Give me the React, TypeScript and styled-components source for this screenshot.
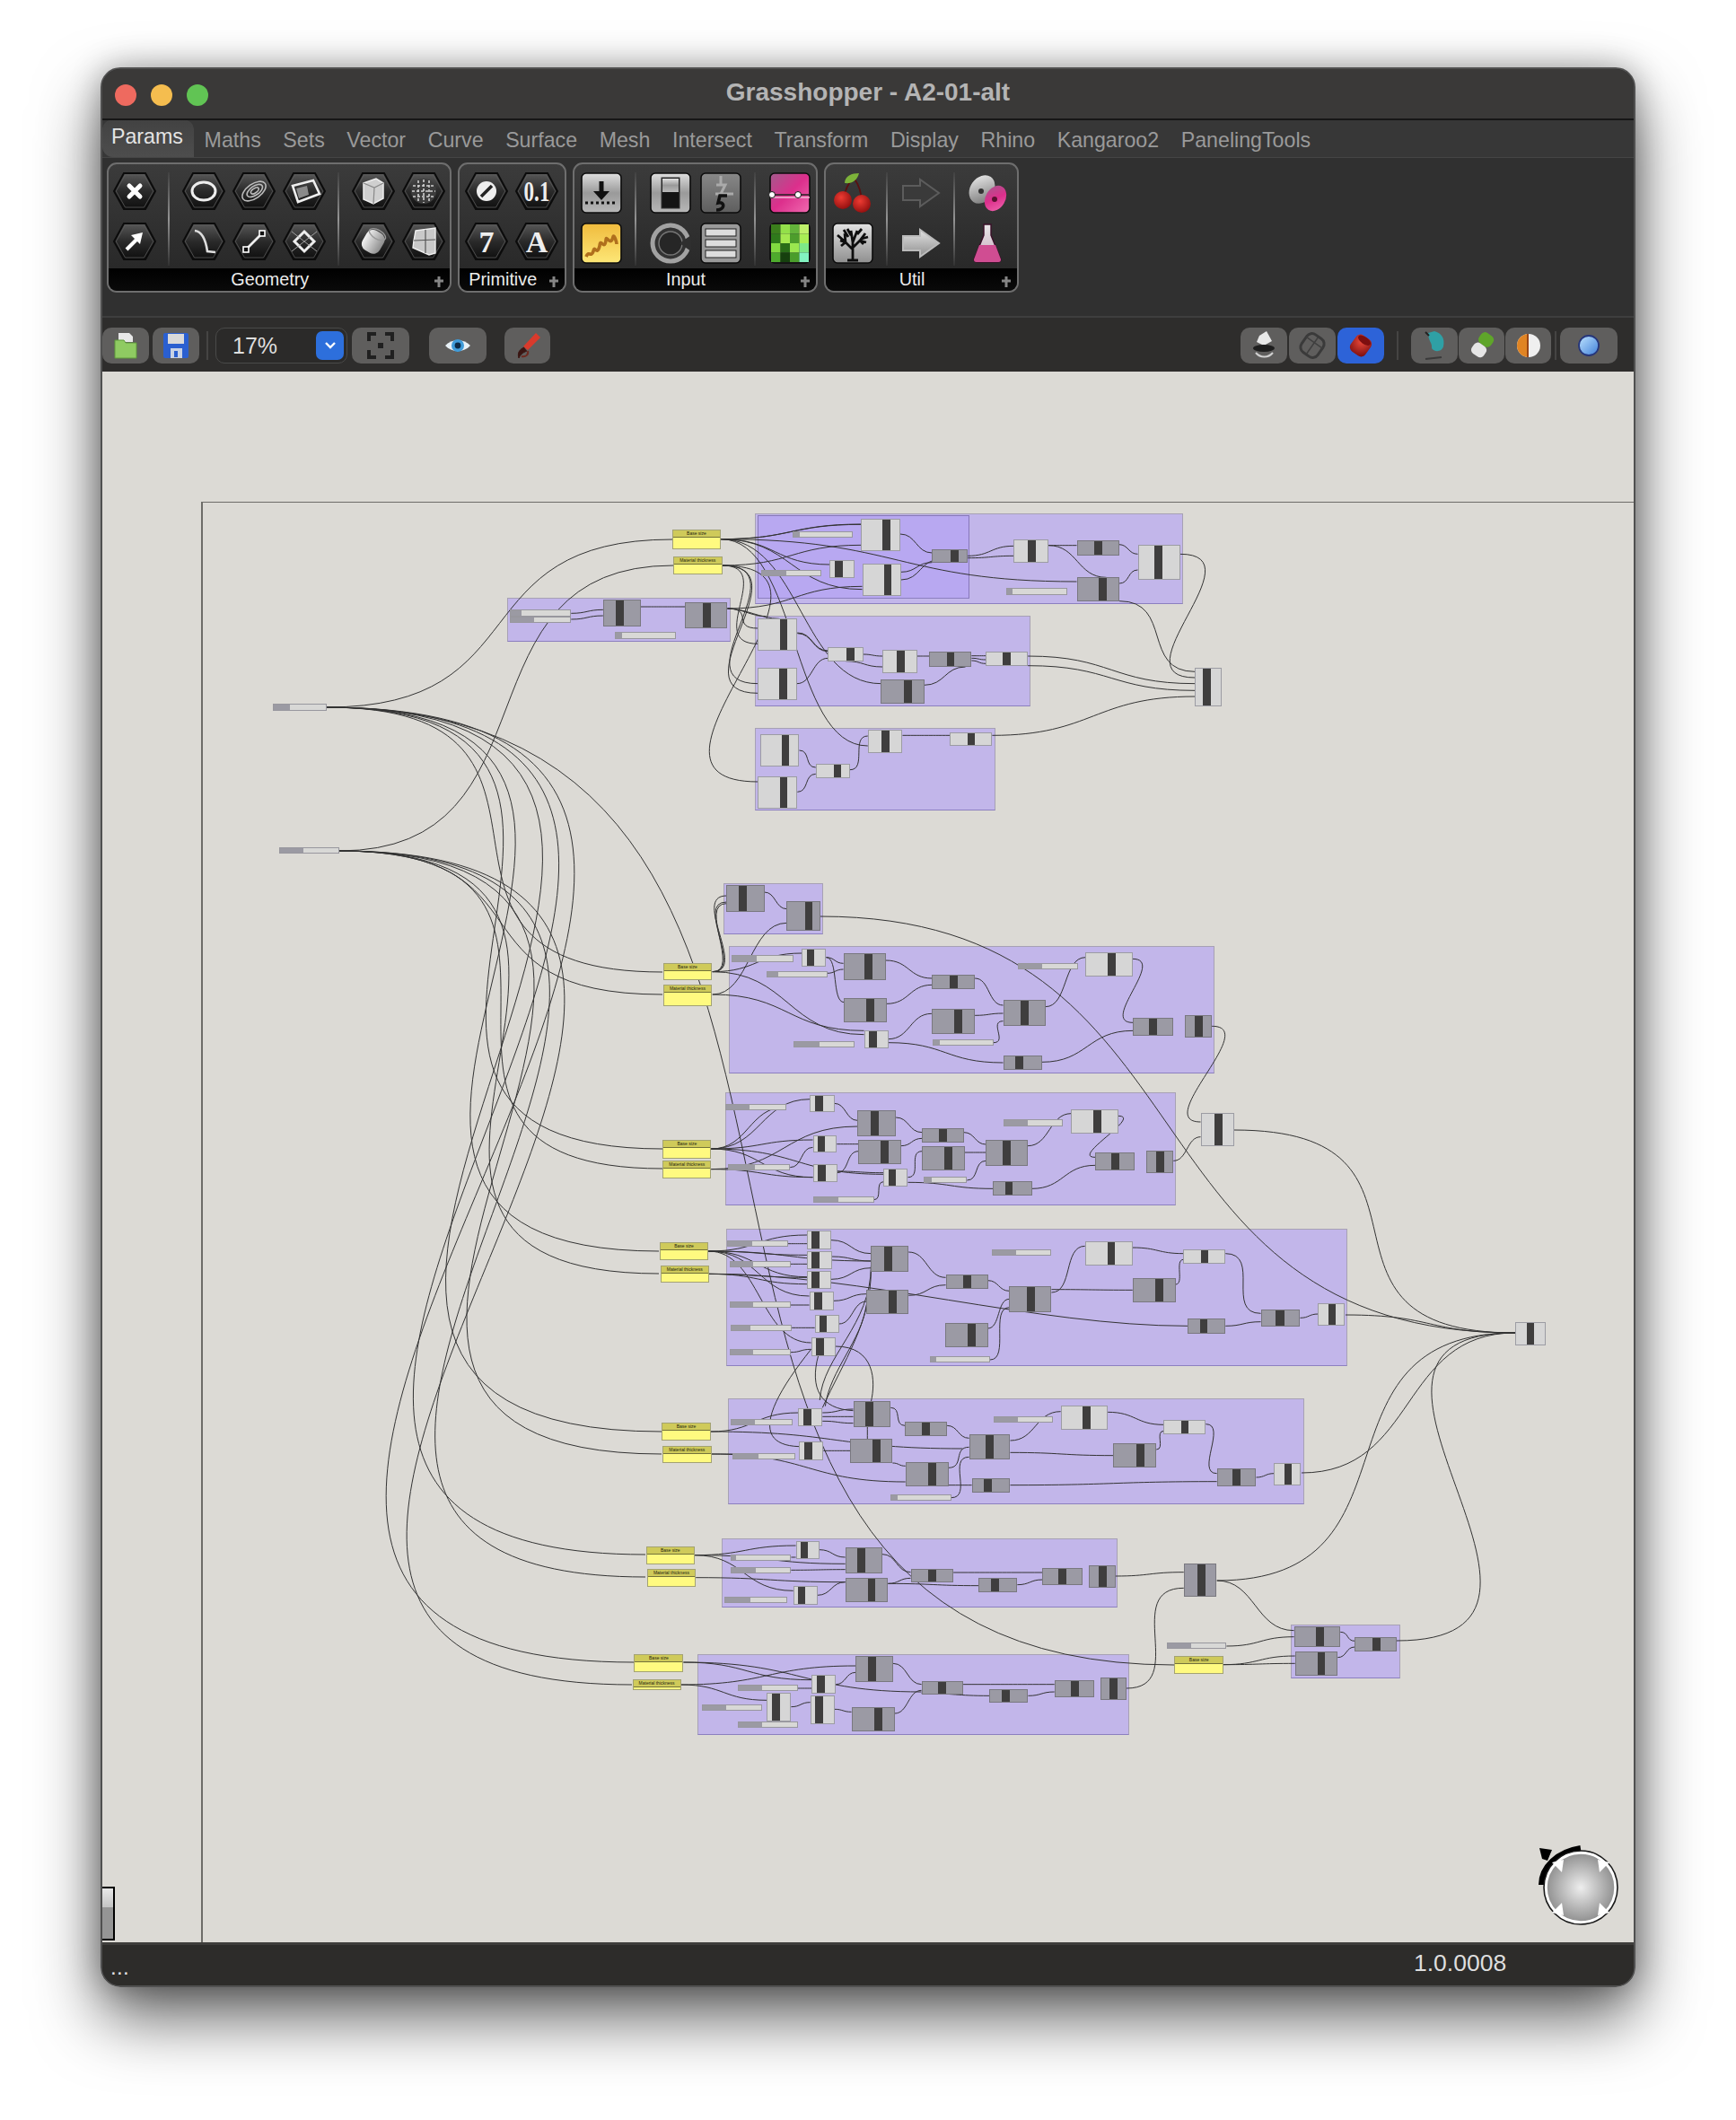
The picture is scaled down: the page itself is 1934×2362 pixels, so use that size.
import React from "react";
import styled, { createGlobalStyle } from "styled-components";

const Global = createGlobalStyle`
  html, body { margin: 0; padding: 0; background: #fff; }
  body { width: 1934px; height: 2362px; overflow: hidden; font-family: "Liberation Sans", Arial, sans-serif; }
`;

/* ---------- chrome ---------- */
const Page = styled.div`
  width: 1934px; height: 2362px; padding: 75px 0 0 112px; box-sizing: border-box;
`;
const Win = styled.div`
  width: 1710px; height: 2139px; box-sizing: border-box; border: 2px solid #505050; border-radius: 22px;
  overflow: hidden; display: flex; flex-direction: column; background: #2f2e2d;
`;
const WinShadow = styled.div`
  width: 1710px; height: 2139px; border-radius: 22px;
  box-shadow: 0 34px 72px rgba(0,0,0,.62), 0 0 34px rgba(0,0,0,.3);
`;
const TitleBar = styled.div`
  height: 55px; flex: none; box-sizing: content-box; background: #3a3938; border-bottom: 2px solid #161616; position: relative;
  display: flex; align-items: center; justify-content: center; padding-bottom: 0;
  color: #b4b4b4; font-weight: 700; font-size: 28px; line-height: 52px;
`;
const TitleText = styled.span`
  margin-top: -3px;
`;
const Lights = styled.div`
  position: absolute; left: 14px; top: 17px; display: flex; gap: 16px;
`;
const Light = styled.span<{ $c: string }>`
  width: 24px; height: 24px; border-radius: 50%; background: ${p => p.$c};
`;
const TabStrip = styled.div`
  height: 42px; flex: none; background: #373737; display: flex; align-items: flex-end; gap: 24.6px;
  border-bottom: 1px solid #454545; box-sizing: border-box; font-size: 23.2px; color: #9a9a9a;
`;
const ActiveTab = styled.div`
  width: 102px; height: 42px; box-sizing: border-box; padding: 3px 0 0 10px; margin-right: -13px;
  background: linear-gradient(#424242, #4d4d4d); border-radius: 12px 12px 0 12px; color: #e4e4e4; line-height: 32px;
`;
const Tab = styled.div` line-height: 38px; `;
const Ribbon = styled.div`
  height: 178px; flex: none; box-sizing: border-box; background: #303030; padding: 5px 0 0 4.5px; display: flex; gap: 7px;
  border-bottom: 2px solid #3e3e3e;
`;
const Panel = styled.div<{ $w: number }>`
  width: ${p => p.$w}px; height: 145px; box-sizing: border-box; border: 2px solid #6e6e6e; border-radius: 11px; overflow: hidden;
  display: flex; flex-direction: column; background: linear-gradient(#3b3b3b, #252525);
`;
const PanelIcons = styled.div<{ $pad?: number }>`
  height: 116px; flex: none; box-sizing: border-box; padding: 9px 0 0 ${p => p.$pad ?? 6}px; display: flex;
`;
const PanelLabel = styled.div`
  flex: 1; background: linear-gradient(#000, #0a0a0a); color: #ececec; font-size: 19.8px; text-align: center; line-height: 25px; position: relative;
  padding-right: 20px;
`;
const PlusMark = styled.svg`
  position: absolute; right: 5px; top: 8px;
`;
const IconGrid = styled.div<{ $cols: number; $square?: boolean }>`
  display: grid; grid-template-columns: repeat(${p => p.$cols}, ${p => (p.$square ? 46 : 48)}px);
  grid-auto-rows: ${p => (p.$square ? 46 : 42)}px; column-gap: ${p => (p.$square ? 10 : 8)}px; row-gap: ${p => (p.$square ? 10 : 14)}px;
`;
const PanelSep = styled.div<{ $m?: number }>`
  width: 2px; height: 104px; margin: 0 ${p => p.$m ?? 13.5}px; flex: none; background: linear-gradient(rgba(200,200,200,.05), rgba(200,200,200,.65) 50%, rgba(200,200,200,.05));
`;
const Toolbar = styled.div`
  height: 60px; flex: none; box-sizing: border-box; background: #2e2d2c; display: flex; align-items: center; padding-top: 2px;
`;
const ToolBtn = styled.div<{ $w: number; $ml?: number; $mr?: number; $on?: boolean }>`
  width: ${p => p.$w}px; height: 40px; margin-left: ${p => p.$ml ?? 0}px; margin-right: ${p => p.$mr ?? 0}px; flex: none; border-radius: 10px;
  background: ${p => (p.$on ? "#2d63d8" : "#5f5e5d")}; display: flex; align-items: center; justify-content: center;
`;
const ToolSep = styled.div<{ $ml: number }>`
  width: 2px; height: 32px; margin-left: ${p => p.$ml}px; background: #454443; flex: none;
`;
const ZoomSelect = styled.div`
  width: 147px; height: 40px; margin-left: 8px; box-sizing: border-box; border: 1px solid #4a4a49; border-radius: 10px; background: #2b2a29;
  display: flex; align-items: center; justify-content: space-between; padding: 0 3px 0 18px; color: #dedede; font-size: 25px; flex: none;
`;
const ZoomArrow = styled.div`
  width: 31px; height: 32px; border-radius: 7px; background: #2d6fdc; display: flex; align-items: center; justify-content: center;
`;
const Grow = styled.div` flex: 1; `;
const Canvas = styled.div`
  flex: 1; position: relative; overflow: hidden; background: #dcdad5; min-height: 0;
`;
const StatusBar = styled.div`
  height: 48px; flex: none; background: #2d2c2a; color: #e2e2e2; display: flex; align-items: center; box-sizing: border-box;
  padding: 0 0 4px 9px; position: relative; border-top: 3px solid #3e3d3b;
`;
const Dots = styled.span` font-size: 24px; line-height: 1; padding-top: 8px; letter-spacing: .3px; `;
const Version = styled.span` position: absolute; left: 1461px; top: 5px; font-size: 26.5px; color: #dedede; `;

/* ---------- canvas parts ---------- */
const Frame = styled.div`
  position: absolute; left: 110px; top: 145px; right: 0; bottom: 0; border-left: 2px solid #6d6c68; border-top: 1px solid #6d6c68;
`;
const Group = styled.div<{ $inner?: boolean }>`
  position: absolute; box-sizing: border-box;
  background: ${p => (p.$inner ? "#b8a8f1" : "#c2b6ea")};
  border: 1px solid ${p => (p.$inner ? "#8677b8" : "#a7a1b4")};
  border-bottom: 1.5px solid #8c7fc0;
`;
const WireLayer = styled.svg`
  position: absolute; left: 0; top: 0;
`;
const Node = styled.div<{ $gray?: boolean }>`
  position: absolute; box-sizing: border-box; background: ${p => (p.$gray ? "#9b9aa4" : "#d6d6d6")};
  border: 1px solid ${p => (p.$gray ? "#79787f" : "#9c9ca3")};
`;
const NodeBar = styled.div`
  position: absolute; top: 0; bottom: 0; background: #3f3e3e;
`;
const Slider = styled.div`
  position: absolute; box-sizing: border-box; background: #d8d8d6; border: 1px solid #98979e;
`;
const SliderGrip = styled.div`
  height: 100%; background: #9b9aa3;
`;
const Sticky = styled.div`
  position: absolute; box-sizing: border-box; background: #fffa80; border: 1px solid #a3a273; display: flex; flex-direction: column;
`;
const StickyHead = styled.div`
  height: 7px; flex: none; background: #cfca5a; border-bottom: 1px solid #73723a; color: #26260f; font-size: 5px; line-height: 7px; text-align: center; overflow: hidden; white-space: nowrap;
`;
const ScrollStub = styled.div`
  position: absolute; left: 0; bottom: 2px; width: 12px; height: 56px; border: 2px solid #000; border-left: 0;
  background: linear-gradient(#e8e8e8, #c4c4c4 37%, #959595 37%);
`;
const NavWidget = styled.svg`
  position: absolute; left: 1592px; top: 1634px;
`;

/* ---------- coordinate maps from measuring crops ---------- */
type Crop = { ox: number; oy: number; sx: number; sy: number };
const crop = (ox: number, oy: number, sx: number, sy: number): Crop => ({ ox, oy, sx, sy });
const OX = 114, OY = 414; // canvas origin
const Z4 = crop(550, 560, 820 / 1568, 1 / 3);
const Z5 = crop(780, 970, 600 / 1568, 1 / 3);
const Z8 = crop(700, 1360, 800 / 1568, 1 / 3);
const Z9 = crop(700, 1700, 900 / 1568, 1 / 3);
const Z10 = crop(1260, 1100, 1 / 3, 880 / 1568);
const Z11 = crop(280, 730, 560 / 1568, 700 / 1568);
const RR = crop(0, 0, 1, 1);
const mx = (c: Crop, x: number) => c.ox + x * c.sx - OX;
const my = (c: Crop, y: number) => c.oy + y * c.sy - OY;

type Box = { l: number; t: number; w: number; h: number };
const box = (c: Crop, x0: number, x1: number, y0: number, y1: number): Box => ({
  l: mx(c, x0), t: my(c, y0), w: (x1 - x0) * c.sx, h: (y1 - y0) * c.sy,
});
const pos = (b: Box) => ({ left: b.l, top: b.t, width: b.w, height: b.h });

const groups: { b: Box; inner?: boolean }[] = [];
const nodes: { b: Box; gray: boolean; bl: number; bw: number }[] = [];
const sliders: { b: Box; g: number }[] = [];
const stickies: { b: Box; t: string }[] = [];
const paths: string[] = [];

const G = (c: Crop, a: number, b: number, d: number, e: number, inner?: boolean) => groups.push({ b: box(c, a, b, d, e), inner });
const N = (c: Crop, list: (string | number)[][]) => list.forEach(([k, x0, x1, y0, y1, b0, b1]) => {
  nodes.push({
    b: box(c, x0 as number, x1 as number, y0 as number, y1 as number), gray: k === "g",
    bl: ((b0 as number) - (x0 as number)) * c.sx, bw: ((b1 as number) - (b0 as number)) * c.sx,
  });
});
const S = (c: Crop, list: number[][]) => list.forEach(([x0, x1, y0, y1, g]) => {
  sliders.push({ b: box(c, x0, x1, y0, y1), g: (g - x0) * c.sx });
});
const Y = (c: Crop, x0: number, x1: number, y0: number, y1: number, t: string) => stickies.push({ b: box(c, x0, x1, y0, y1), t });
const W = (c: Crop, list: number[][]) => list.forEach(([x1, y1, x2, y2, k]) => {
  const ax = mx(c, x1), ay = my(c, y1), bx = mx(c, x2), by = my(c, y2);
  const h = k ?? Math.max(Math.abs(bx - ax) * 0.5, 6 + Math.abs(by - ay) * 0.35);
  paths.push(`M${ax} ${ay}C${ax + h} ${ay} ${bx - h} ${by} ${bx} ${by}`);
});
const Raw = (c: Crop, list: number[][]) => list.forEach(([a, b, d, e, f, g, h, i]) => {
  paths.push(`M${mx(c, a)} ${my(c, b)}C${mx(c, d)} ${my(c, e)} ${mx(c, f)} ${my(c, g)} ${mx(c, h)} ${my(c, i)}`);
});

const BASE = "Base size", MAT = "Material thickness";

/* group B / A / C / D */
G(Z4, 556, 1468, 35, 340); G(Z4, 563, 1014, 43, 320, true); G(Z4, 28, 504, 317, 465); G(Z4, 556, 1144, 378, 682); G(Z4, 557, 1068, 752, 1030);
Y(Z4, 380, 484, 91, 155, BASE); Y(Z4, 382, 487, 181, 241, MAT);
S(Z4, [[34, 165, 358, 380, 57], [34, 165, 380, 401, 84], [258, 389, 433, 455, 272], [636, 765, 95, 117, 650], [569, 698, 226, 245, 621], [1091, 1221, 286, 308, 1104]]);
N(Z4, [
  ["g", 233, 313, 325, 413, 258, 275], ["g", 408, 498, 334, 419, 444, 461],
  ["l", 783, 866, 53, 161, 827, 844], ["l", 716, 769, 193, 252, 725, 742], ["l", 785, 868, 203, 311, 830, 846], ["g", 934, 1010, 155, 201, 971, 989],
  ["l", 1108, 1182, 124, 200, 1136, 1153], ["g", 1242, 1332, 127, 176, 1278, 1295], ["g", 1242, 1333, 250, 329, 1287, 1304], ["l", 1372, 1462, 142, 257, 1406, 1423],
  ["l", 563, 647, 388, 494, 608, 624], ["l", 563, 646, 553, 659, 607, 623], ["l", 712, 787, 484, 530, 750, 767], ["l", 828, 902, 493, 569, 856, 873],
  ["g", 928, 1018, 499, 549, 964, 980], ["l", 1048, 1138, 499, 545, 1083, 1100], ["g", 825, 917, 591, 671, 872, 889], ["l", 1494, 1551, 553, 681, 1509, 1525],
  ["l", 567, 651, 775, 881, 612, 628], ["l", 563, 647, 916, 1022, 608, 624], ["l", 686, 759, 874, 920, 723, 739], ["l", 797, 871, 760, 836, 824, 841], ["l", 972, 1062, 767, 812, 1008, 1024],
]);
W(Z4, [
  [484, 122, 783, 72], [484, 122, 716, 207], [484, 122, 785, 290], [484, 122, 1242, 264], [484, 122, 825, 605], [484, 122, 797, 813], [484, 122, 783, 73],
  [487, 210, 783, 142], [487, 210, 563, 472, 60], [487, 210, 563, 605, 90], [487, 210, 563, 637, 95], [487, 210, 563, 933, 170],
  [498, 354, 785, 280], [498, 354, 608, 388, 20], [498, 354, 563, 420, 30], [498, 354, 580, 380, 16],
  [165, 370, 233, 358], [165, 390, 233, 378], [313, 348, 408, 348],
  [866, 105, 934, 168], [868, 232, 934, 200], [868, 258, 950, 190], [1010, 178, 1108, 145], [1010, 185, 1108, 178], [1182, 143, 1242, 143], [1182, 143, 1305, 250],
  [1332, 140, 1372, 172], [1333, 270, 1372, 225], [1462, 172, 1494, 585, 90], [1333, 329, 1494, 565, 60],
  [647, 435, 712, 495], [647, 437, 712, 497], [646, 605, 712, 520], [750, 530, 828, 549], [787, 507, 828, 513], [902, 513, 928, 513], [1018, 512, 1048, 512], [1018, 520, 1048, 525], [1018, 528, 1048, 538],
  [917, 610, 1005, 549], [1138, 513, 1494, 605], [1138, 545, 1494, 628], [1062, 778, 1494, 648],
  [651, 828, 686, 885], [647, 967, 686, 907], [759, 893, 797, 780], [871, 778, 972, 778],
]);

/* group E / F / G */
G(Z5, 67, 357, 41, 212); G(Z5, 83, 1498, 252, 677); G(Z5, 74, 1386, 740, 1120);
Y(Z11, 1284, 1437, 769, 812, BASE); Y(Z11, 1284, 1437, 821, 876, MAT); Y(Z11, 1283, 1435, 1210, 1256, BASE); Y(Z11, 1283, 1435, 1261, 1306, MAT);
S(Z5, [[92, 271, 283, 305, 161], [194, 370, 335, 356, 226], [272, 450, 571, 592, 345], [676, 854, 565, 586, 695], [924, 1100, 308, 329, 992],
  [72, 250, 779, 800, 140], [82, 261, 982, 1003, 157], [652, 777, 1024, 1045, 671], [328, 506, 1090, 1110, 399], [882, 1057, 832, 854, 950]]);
N(Z5, [
  ["g", 77, 187, 49, 137, 111, 134], ["g", 252, 350, 103, 201, 302, 325],
  ["l", 296, 367, 261, 320, 308, 330], ["g", 417, 541, 277, 365, 476, 499], ["g", 419, 543, 426, 507, 481, 504], ["g", 675, 800, 349, 395, 724, 747], ["g", 674, 799, 463, 545, 737, 760],
  ["l", 477, 548, 533, 593, 489, 511], ["g", 882, 1005, 433, 520, 930, 953], ["g", 882, 995, 619, 665, 915, 938], ["l", 1122, 1259, 274, 355, 1184, 1207], ["g", 1260, 1377, 492, 551, 1304, 1327], ["g", 1412, 1490, 484, 557, 1437, 1461],
  ["l", 320, 391, 749, 808, 332, 355], ["g", 458, 570, 802, 887, 494, 517], ["l", 328, 398, 884, 943, 340, 361], ["g", 461, 585, 900, 980, 523, 546], ["l", 328, 399, 980, 1042, 340, 363],
  ["g", 646, 768, 862, 908, 693, 716], ["g", 646, 771, 922, 1002, 709, 732], ["g", 832, 954, 901, 986, 878, 901], ["l", 534, 605, 997, 1056, 546, 568], ["g", 853, 966, 1039, 1087, 885, 908],
  ["l", 1080, 1217, 798, 878, 1141, 1166], ["g", 1150, 1266, 943, 1003, 1194, 1217], ["g", 1300, 1378, 937, 1010, 1325, 1348], ["l", 1457, 1554, 811, 920, 1496, 1519],
]);
W(Z5, [
  [36, 338, 77, 84, 40], [36, 338, 77, 105, 36], [36, 338, 77, 110, 32], [36, 414, 252, 175], [187, 72, 252, 128],
  [36, 338, 296, 276], [36, 338, 477, 548], [36, 414, 477, 535], [367, 290, 417, 310], [370, 343, 417, 330], [367, 290, 419, 440, 14],
  [541, 300, 675, 360], [543, 445, 675, 382], [800, 360, 882, 450], [548, 563, 674, 478], [548, 575, 882, 642], [800, 484, 882, 477], [854, 575, 882, 503, 16], [1005, 455, 1122, 290],
  [995, 640, 1260, 535], [1259, 295, 1260, 508, 38], [1490, 520, 1457, 840, 55], [1378, 970, 1457, 890],
  [32, 930, 320, 764], [32, 930, 250, 790], [32, 998, 458, 855], [32, 930, 328, 900], [32, 930, 534, 1015], [32, 930, 328, 1025], [32, 998, 328, 1025],
  [391, 778, 458, 835], [398, 914, 461, 914], [398, 1005, 534, 1010], [262, 992, 328, 925], [398, 1010, 461, 938], [570, 825, 646, 875], [585, 920, 646, 895], [605, 1025, 646, 938, 16],
  [771, 942, 832, 942], [768, 875, 832, 915], [777, 1035, 832, 970], [954, 920, 1080, 812], [506, 1100, 534, 1040, 10], [605, 1042, 853, 1063], [966, 1063, 1150, 985], [1217, 820, 1150, 958, 28],
]);

/* group H / I */
G(Z8, 214, 1570, 26, 485); G(Z8, 217, 1475, 593, 947);
Y(Z8, 68, 175, 73, 132, BASE); Y(Z8, 70, 176, 149, 207, MAT); Y(Z8, 73, 180, 676, 735, BASE); Y(Z8, 74, 182, 752, 811, MAT);
S(Z8, [[215, 349, 67, 88, 268], [221, 354, 134, 155, 271], [221, 354, 271, 292, 271], [224, 357, 349, 370, 264], [221, 354, 430, 451, 271], [658, 789, 454, 475, 670], [793, 924, 97, 118, 845],
  [224, 358, 664, 685, 275], [228, 364, 778, 799, 283], [573, 705, 916, 937, 587], [797, 928, 655, 676, 849]]);
N(Z8, [
  ["l", 390, 443, 34, 96, 398, 416], ["l", 390, 445, 101, 161, 398, 416], ["l", 390, 443, 168, 228, 398, 416], ["l", 395, 448, 238, 299, 404, 421], ["l", 407, 460, 316, 376, 415, 432], ["l", 399, 452, 391, 452, 408, 425],
  ["g", 530, 612, 85, 170, 557, 574], ["g", 520, 612, 232, 312, 566, 584], ["g", 693, 785, 181, 227, 729, 747], ["g", 832, 924, 220, 305, 868, 886], ["g", 691, 785, 343, 422, 738, 756],
  ["l", 997, 1101, 70, 149, 1044, 1060], ["g", 1101, 1195, 193, 273, 1149, 1166], ["l", 1212, 1304, 97, 143, 1248, 1265], ["g", 1221, 1304, 328, 377, 1246, 1263], ["g", 1381, 1467, 296, 355, 1412, 1431], ["l", 1506, 1565, 277, 350, 1527, 1543],
  ["l", 371, 424, 626, 686, 380, 397], ["g", 491, 573, 604, 689, 516, 534], ["g", 604, 696, 673, 719, 639, 657], ["l", 373, 426, 739, 800, 382, 400], ["g", 485, 577, 730, 811, 531, 549], ["g", 605, 699, 808, 887, 653, 670],
  ["g", 744, 834, 713, 799, 778, 796], ["g", 750, 834, 861, 908, 774, 792], ["l", 944, 1047, 619, 700, 990, 1007], ["g", 1059, 1153, 745, 825, 1107, 1125], ["l", 1169, 1261, 667, 713, 1205, 1222], ["g", 1285, 1371, 829, 888, 1317, 1335], ["l", 1410, 1469, 811, 884, 1430, 1447],
]);
W(Z8, [
  [175, 102, 390, 48], [175, 102, 390, 115], [175, 102, 530, 135], [175, 102, 390, 188], [175, 102, 395, 252], [175, 102, 399, 408], [176, 178, 390, 190], [176, 178, 390, 212], [176, 178, 1221, 352, 170],
  [349, 77, 390, 77], [354, 145, 390, 145], [354, 282, 395, 282], [357, 358, 407, 358], [354, 440, 399, 430],
  [443, 65, 530, 110], [445, 120, 530, 135], [443, 196, 530, 158], [448, 268, 520, 245], [460, 345, 520, 270],
  [612, 105, 693, 190], [612, 250, 693, 215], [785, 200, 832, 235], [785, 360, 832, 262, 14], [790, 465, 832, 290, 22], [924, 240, 997, 85], [1101, 90, 1212, 110], [1195, 213, 1212, 130, 10],
  [924, 230, 1101, 232], [1304, 110, 1381, 310, 40], [1304, 352, 1381, 338], [1467, 325, 1506, 312],
  [180, 705, 371, 642], [180, 705, 730, 762], [182, 780, 605, 873], [182, 780, 228, 780], [424, 655, 491, 655], [424, 642, 491, 630], [424, 670, 491, 677], [426, 769, 485, 769],
  [573, 625, 604, 685], [696, 685, 744, 727], [577, 810, 605, 820], [699, 826, 744, 757, 18], [705, 926, 744, 790, 24], [834, 735, 944, 638], [834, 775, 1059, 785], [1047, 640, 1169, 682], [1153, 765, 1169, 703, 10],
  [1261, 680, 1285, 845, 24], [699, 884, 750, 884], [834, 884, 1285, 872], [1371, 858, 1410, 845],
]);
Raw(Z8, [
  [399, 430, 300, 620, 270, 750, 373, 755], [415, 450, 395, 560, 420, 630, 491, 635],
  [530, 150, 530, 350, 425, 450, 418, 600], [520, 280, 510, 400, 440, 500, 430, 620], [530, 165, 530, 340, 470, 470, 424, 625],
  [452, 420, 540, 420, 540, 540, 530, 605], [522, 689, 522, 700, 522, 715, 522, 730],
]);

/* group J / K / L */
G(Z9, 181, 950, 42, 272); G(Z9, 135, 973, 429, 698); G(Z9, 1285, 1498, 329, 511);
Y(Z9, 34, 129, 70, 128, BASE); Y(Z9, 36, 131, 145, 203, MAT); Y(Z9, 11, 107, 428, 488, BASE); Y(Z9, 8, 102, 513, 550, MAT); Y(Z9, 1060, 1155, 436, 494, BASE);
S(Z9, [[198, 316, 95, 116, 208], [198, 316, 137, 158, 246], [187, 308, 236, 257, 236], [212, 329, 532, 553, 258], [142, 259, 598, 619, 188], [212, 329, 654, 675, 257], [1045, 1161, 391, 412, 1090]]);
N(Z9, [
  ["l", 325, 371, 51, 110, 333, 347], ["g", 421, 493, 73, 160, 443, 458], ["g", 421, 504, 175, 254, 463, 478], ["l", 320, 367, 202, 263, 328, 342], ["g", 548, 631, 143, 188, 580, 596], ["g", 680, 755, 175, 223, 702, 718], ["g", 804, 881, 140, 199, 833, 848], ["g", 893, 946, 133, 206, 911, 926],
  ["g", 1078, 1142, 127, 237, 1103, 1119],
  ["l", 356, 403, 499, 560, 364, 379], ["g", 441, 514, 436, 523, 463, 479], ["l", 269, 316, 559, 655, 277, 293], ["l", 353, 400, 566, 662, 361, 376], ["g", 433, 517, 607, 688, 476, 491], ["g", 569, 650, 518, 564, 599, 615], ["g", 701, 776, 545, 592, 723, 739], ["g", 827, 904, 516, 574, 857, 872], ["g", 916, 967, 508, 581, 932, 947],
  ["g", 1292, 1382, 337, 404, 1333, 1348], ["g", 1294, 1377, 420, 500, 1336, 1351], ["g", 1410, 1492, 373, 419, 1443, 1458],
]);
W(Z9, [
  [129, 98, 325, 66], [129, 98, 421, 127], [129, 98, 320, 217], [131, 173, 421, 188], [316, 105, 325, 105], [316, 148, 421, 146], [371, 80, 421, 105], [367, 232, 421, 188],
  [504, 193, 680, 200], [493, 95, 548, 155], [504, 193, 548, 175], [631, 156, 804, 156], [755, 197, 804, 180], [946, 168, 1078, 155], [967, 543, 1078, 208, 70], [1142, 183, 1292, 350],
  [107, 456, 356, 515], [102, 531, 441, 468], [107, 456, 569, 555], [102, 531, 269, 583], [329, 543, 356, 543], [403, 530, 441, 490], [316, 605, 353, 590], [400, 613, 433, 622],
  [514, 460, 569, 530], [517, 627, 569, 550], [650, 530, 827, 530], [569, 560, 701, 568], [776, 568, 827, 555],
  [1155, 464, 1294, 435], [1155, 464, 1294, 460], [1161, 402, 1292, 371], [1382, 355, 1410, 385], [1377, 440, 1410, 405],
]);

/* left-hand sliders and long wires, final node */
S(Z11, [[68, 234, 121, 138, 119], [87, 275, 480, 496, 161]]);
N(Z10, [["l", 1285, 1387, 664, 711, 1320, 1345]]);
const long = (x1: number, y1: number, x2: number, y2: number) => W(RR, [[x1, y1, x2, y2, 0.6 * Math.abs(y2 - y1) + 150]]);
const S1: [number, number] = [364, 788], S2: [number, number] = [378, 948];
[[738, 1083], [738, 1280], [734, 1394], [737, 1595], [719, 1732], [706, 1852]].forEach(([x, y]) => long(S1[0], S1[1], x, y));
[[738, 1108], [738, 1302], [734, 1419], [737, 1620], [719, 1757], [704, 1877]].forEach(([x, y]) => long(S2[0], S2[1], x, y));
const FIN: [number, number] = [1688, 1485];
W(RR, [
  [364, 788, 749, 601, 240], [378, 948, 750, 630, 250], [364, 788, 1308, 1855, 720],
  [914, 1021, FIN[0], FIN[1], 450], [1375, 1259, FIN[0], FIN[1], 260], [1499, 1465, FIN[0], FIN[1], 100], [1450, 1641, FIN[0], FIN[1], 130], [1356, 1761, FIN[0], FIN[1], 240], [1556, 1828, FIN[0], FIN[1], 255],
]);

/* ---------- palette icons ---------- */
const Hex: React.FC<{ children?: React.ReactNode }> = ({ children }) => (
  <svg width="48" height="42" viewBox="0 0 48 42">
    <polygon points="12,1 36,1 47,21 36,41 12,41 1,21" fill="url(#hexFill)" stroke="#0b0b0b" strokeWidth="2" />
    <polygon points="13.5,3 34.5,3 44.7,21 34.5,39 13.5,39 3.3,21" fill="none" stroke="#5a5a5a" strokeWidth=".8" />
    {children}
  </svg>
);
const Wt = { fill: "none", stroke: "#eee", strokeWidth: 3 } as const;
const Square: React.FC<{ fill?: string; children?: React.ReactNode }> = ({ fill = "url(#sqFill)", children }) => (
  <svg width="46" height="46" viewBox="0 0 46 46">
    <rect x="1" y="1" width="44" height="44" rx="5" fill={fill} stroke="#0c0c0c" strokeWidth="1.6" />
    {children}
  </svg>
);

const GeoIcons = [
  <Hex><path d="M18 15L30 27M30 15L18 27" stroke="#fff" strokeWidth="5" strokeLinecap="round" /></Hex>,
  <Hex><path d="M15 30L27 18" stroke="#fff" strokeWidth="4" /><polygon points="33,11 20,14 30,24" fill="#fff" /></Hex>,
];
const GeoA = [
  <Hex><ellipse cx="24" cy="21" rx="13" ry="10" {...Wt} /></Hex>,
  <Hex><g transform="rotate(-35 24 21)" fill="none" stroke="#bbb" strokeWidth="1.6"><ellipse cx="24" cy="21" rx="15" ry="8" /><ellipse cx="25" cy="21" rx="10" ry="5" /><ellipse cx="25" cy="21" rx="5" ry="2.5" /></g></Hex>,
  <Hex><polygon points="11,15 34,9 41,24 17,33" fill="none" stroke="#eee" strokeWidth="2.6" /><polygon points="15,18 27,15 29,25 18,29" fill="#8a8a8a" /></Hex>,
  <Hex><path d="M14 9C22 10 26 18 28 32L37 33" fill="none" stroke="#ddd" strokeWidth="2.6" /></Hex>,
  <Hex><path d="M15 30L33 12" stroke="#eee" strokeWidth="2.6" /><rect x="12" y="27" width="6" height="6" fill="#111" stroke="#fff" strokeWidth="1.6" /><rect x="30" y="9" width="6" height="6" fill="#111" stroke="#fff" strokeWidth="1.6" /></Hex>,
  <Hex><path d="M24 10L35 21L24 32L13 21Z" {...Wt} /><path d="M10 10L38 32M38 10L10 32" stroke="#aaa" strokeWidth=".9" /></Hex>,
];
const GeoB = [
  <Hex><polygon points="13,12 27,7 35,12 35,29 24,35 13,30" fill="#cfcfcf" stroke="#eee" strokeWidth="1.5" /><path d="M13 12L25 17L35 12M25 17L24 35" stroke="#888" fill="none" strokeWidth="1.2" /></Hex>,
  <Hex><circle cx="24" cy="21" r="14" fill="#3d3d3d" /><path d="M12 15H36M12 27H36M18 9V33M30 9V33M24 8V34M11 21H37" stroke="#cfcfcf" strokeWidth="1.6" strokeDasharray="3 2" /></Hex>,
  <Hex><g transform="rotate(30 24 21)"><rect x="13" y="9" width="22" height="25" rx="8" fill="url(#cylFill)" /><ellipse cx="24" cy="12" rx="10" ry="5" fill="none" stroke="#999" strokeWidth="1.4" /></g></Hex>,
  <Hex><polygon points="15,9 37,6 37,34 30,36 12,28 13,20" fill="#c9c9c9" stroke="#eee" strokeWidth="1.4" /><path d="M26 8V34M13 20L37 19" stroke="#555" strokeWidth="1.2" /></Hex>,
];
function SvgText({ y, size, sx = 1, children }: { y: number; size: number; sx?: number; children: React.ReactNode }) {
  return <text transform={`translate(24 ${y}) scale(${sx} 1)`} textAnchor="middle" fontFamily="Liberation Serif, serif" fontWeight="700" fontSize={size} fill="#eee">{children}</text>;
}
const PrimIcons = [
  <Hex><circle cx="24" cy="21" r="11" fill="#eee" /><path d="M18 27L30 15" stroke="#222" strokeWidth="3.5" /></Hex>,
  <Hex><SvgText y={32} size={32} sx={0.72}>0.1</SvgText></Hex>,
  <Hex><SvgText y={33} size={34}>7</SvgText></Hex>,
  <Hex><SvgText y={33} size={34}>A</SvgText></Hex>,
];

const InA = [
  <Square><path d="M23 10V24" stroke="#111" strokeWidth="5" /><polygon points="14,21 32,21 23,31" fill="#111" /><path d="M5 34H41" stroke="#111" strokeWidth="3" strokeDasharray="3 3" /></Square>,
  <Square fill="url(#yelFill)"><path d="M6 38C9 30 11 40 14 32C15 24 18 38 21 26C22 16 26 32 28 20C28 12 33 28 36 16C37 12 40 22 40 24" fill="none" stroke="#b06f1d" strokeWidth="3.6" /></Square>,
];
const InB = [
  <Square><rect x="13" y="6" width="20" height="34" fill="#141414" stroke="#333" /><rect x="14" y="7" width="18" height="15" fill="url(#sqFill)" /></Square>,
  <Square fill="url(#sqFillDark)"><path d="M23 4V14M17 24H37M23 24L28 14H18" stroke="#aaa" strokeWidth="3" fill="none" /><path d="M30 26H22L20 34C28 32 28 42 18 42" stroke="#111" strokeWidth="3.6" fill="none" /></Square>,
  <svg width="46" height="46" viewBox="0 0 46 46"><circle cx="23" cy="23" r="20" fill="#333" stroke="#a2a2a2" strokeWidth="5" /><circle cx="23" cy="23" r="13" fill="#262626" stroke="#777" strokeWidth="1.4" /><polygon points="33,23 46,14 46,32" fill="#2f2f2f" /></svg>,
  <Square fill="#9a9a9a"><rect x="6" y="7" width="34" height="8" fill="#ddd" stroke="#222" /><rect x="6" y="19" width="34" height="8" fill="#ddd" stroke="#222" /><rect x="6" y="31" width="34" height="8" fill="#ddd" stroke="#222" /></Square>,
];
const checker = [
  ["#3b7e1c", "#94e04a", "#63b33a", "#bff06a"], ["#2f7a1b", "#a4e850", "#4d9d2c", "#a9ee55"], ["#82da40", "#2a6d18", "#9be74f", "#7de888"], ["#4eab2d", "#16400e", "#4a9d2b", "#82f3c0"],
];
const InC = [
  <Square fill="url(#pinkFill)"><path d="M1 25H45" stroke="#222" strokeWidth="1.6" /><path d="M1 28H45" stroke="#f3b9d6" strokeWidth="1.4" /><circle cx="3" cy="25" r="3.5" fill="#fff" stroke="#111" /><circle cx="32" cy="25" r="3.5" fill="#fff" stroke="#111" /></Square>,
  <Square fill="#333">{checker.flatMap((r, i) => r.map((c, j) => <rect key={`${i}-${j}`} x={2 + j * 10.5} y={2 + i * 10.5} width="10.5" height="10.5" fill={c} />))}</Square>,
];
const UtilA = [
  <svg width="46" height="46" viewBox="0 0 46 46"><path d="M24 6C18 12 14 20 13 30M24 6C30 14 33 22 33 34" fill="none" stroke="#5a1010" strokeWidth="1.8" /><path d="M14 12C14 4 22 1 30 1C28 9 22 13 14 12Z" fill="#7db33a" /><circle cx="12" cy="31" r="10" fill="url(#redFill)" /><circle cx="33" cy="35" r="10" fill="url(#redFill)" /></svg>,
  <Square fill="url(#sqFillLight)"><path d="M23 42V22M23 30L13 20M23 28L33 18M15 22L9 20M15 22L14 12M31 20L37 12M31 20L38 22M23 22L21 9M23 22L28 9M18 16L13 8M28 13L33 7M13 20L6 14M33 18L40 16M21 14L17 7M31 20L35 24M15 22L10 26" stroke="#0d0d0d" strokeWidth="2.8" fill="none" /><path d="M17 42H29" stroke="#0d0d0d" strokeWidth="3" /></Square>,
];
const ArrowG = ({ fill, st }: { fill: string; st: string }) => (
  <svg width="46" height="46" viewBox="0 0 46 46"><polygon points="3,15 22,15 22,8 43,23 22,38 22,31 3,31" fill={fill} stroke={st} strokeWidth="2" /></svg>
);
const UtilB = [<ArrowG fill="#3a3a3a" st="#5c5c5c" />, <ArrowG fill="url(#sqFillLight)" st="#bbb" />];
const UtilC = [
  <svg width="46" height="46" viewBox="0 0 46 46"><ellipse cx="17" cy="19" rx="13" ry="17" transform="rotate(35 17 19)" fill="url(#silver)" /><circle cx="16" cy="21" r="3" fill="#333" /><ellipse cx="32" cy="29" rx="11" ry="15" transform="rotate(30 32 29)" fill="url(#pinkFill)" /><circle cx="31" cy="30" r="3" fill="#5a1030" /></svg>,
  <svg width="46" height="46" viewBox="0 0 46 46"><path d="M19 2H27V14L38 41C38 44 36 44 34 44H12C10 44 8 44 8 41L19 14Z" fill="url(#silverDk)" stroke="#3a0f28" strokeWidth="1.4" /><path d="M14 25H32L38 41C38 44 36 44 34 44H12C10 44 8 44 8 41Z" fill="#d04d92" /></svg>,
];

const Defs = () => (
  <svg width="0" height="0" style={{ position: "absolute" }}>
    <defs>
      <linearGradient id="hexFill" x1="0" y1="0" x2="0" y2="1"><stop offset="0" stopColor="#585858" /><stop offset=".5" stopColor="#2a2a2a" /><stop offset="1" stopColor="#0e0e0e" /></linearGradient>
      <linearGradient id="sqFill" x1="0" y1="0" x2="0" y2="1"><stop offset="0" stopColor="#dedede" /><stop offset=".5" stopColor="#9a9a9a" /><stop offset="1" stopColor="#b8b8b8" /></linearGradient>
      <linearGradient id="sqFillDark" x1="0" y1="0" x2="0" y2="1"><stop offset="0" stopColor="#888" /><stop offset="1" stopColor="#5e5e5e" /></linearGradient>
      <linearGradient id="sqFillLight" x1="0" y1="0" x2="0" y2="1"><stop offset="0" stopColor="#e2e2e2" /><stop offset="1" stopColor="#8f8f8f" /></linearGradient>
      <linearGradient id="yelFill" x1="0" y1="0" x2="0" y2="1"><stop offset="0" stopColor="#f0bb3d" /><stop offset="1" stopColor="#fde777" /></linearGradient>
      <linearGradient id="pinkFill" x1="0" y1="0" x2="1" y2="1"><stop offset="0" stopColor="#a35a8c" /><stop offset=".5" stopColor="#dc2f8c" /><stop offset="1" stopColor="#f06ab0" /></linearGradient>
      <linearGradient id="cylFill" x1="0" y1="0" x2="1" y2="0"><stop offset="0" stopColor="#f2f2f2" /><stop offset="1" stopColor="#8d8d8d" /></linearGradient>
      <radialGradient id="redFill" cx=".4" cy=".35" r=".7"><stop offset="0" stopColor="#ee3b32" /><stop offset="1" stopColor="#8f0e0e" /></radialGradient>
      <linearGradient id="silver" x1="0" y1="0" x2="1" y2="1"><stop offset="0" stopColor="#f2f2f2" /><stop offset="1" stopColor="#6f6f6f" /></linearGradient>
      <linearGradient id="silverDk" x1="0" y1="0" x2="0" y2="1"><stop offset="0" stopColor="#e8e8e8" /><stop offset="1" stopColor="#c8a8bc" /></linearGradient>
      <radialGradient id="navFill"><stop offset="0" stopColor="#eeeeee" /><stop offset="1" stopColor="#8f8f8f" /></radialGradient>
      <linearGradient id="blueBall" x1="0" y1="0" x2="1" y2="1"><stop offset="0" stopColor="#bfe4ff" /><stop offset="1" stopColor="#3f7fd9" /></linearGradient>
      <radialGradient id="redCyl" cx=".4" cy=".3" r=".8"><stop offset="0" stopColor="#ec4a3b" /><stop offset="1" stopColor="#7d0f10" /></radialGradient>
    </defs>
  </svg>
);

const Plus = () => (
  <PlusMark width="14" height="14" viewBox="0 0 14 14"><path d="M7 1V13M2 6H12" stroke="#858585" strokeWidth="3" /></PlusMark>
);

/* ---------- toolbar icons ---------- */
const Folder = () => (
  <svg width="28" height="32" viewBox="0 0 28 32"><path d="M6 2H18L22 6V12H6Z" fill="#e8e8e8" /><path d="M2 10H12L14 13H26V30H2Z" fill="#8fcb62" stroke="#5e9a3b" /></svg>
);
const Floppy = () => (
  <svg width="30" height="32" viewBox="0 0 30 32"><rect x="1" y="2" width="28" height="28" rx="2" fill="#2a5fd0" /><rect x="6" y="3" width="18" height="11" fill="#d9d9d9" /><rect x="9" y="19" width="13" height="11" fill="#c8d2e4" /><rect x="13" y="22" width="4" height="7" fill="#2a5fd0" /></svg>
);
const Focus = () => (
  <svg width="32" height="32" viewBox="0 0 32 32"><path d="M3 11V3H11M21 3H29V11M29 21V29H21M11 29H3V21" stroke="#202020" strokeWidth="4" fill="none" /><rect x="13" y="13" width="6" height="6" fill="#202020" /></svg>
);
const Eye = () => (
  <svg width="30" height="20" viewBox="0 0 30 20"><path d="M1 10C8 2 22 2 29 10C22 18 8 18 1 10Z" fill="#e8f1f7" /><circle cx="15" cy="10" r="7" fill="#3f9bd9" /><circle cx="15" cy="10" r="3.4" fill="#0d2a45" /></svg>
);
const Brush = () => (
  <svg width="30" height="32" viewBox="0 0 30 32"><path d="M24 2L29 7L15 21L10 17Z" fill="#d93a2c" /><path d="M11 18C6 20 3 24 5 30C7 26 9 24 14 22" fill="#3a1512" stroke="#3a1512" /><path d="M8 28C13 29 16 26 15 22" stroke="#6d2a20" strokeWidth="2" fill="none" /></svg>
);
const PrevA = () => (
  <svg width="28" height="34" viewBox="0 0 28 34"><path d="M9 6L17 1L23 12L14 17L6 13Z" fill="#e8e8e8" /><ellipse cx="14" cy="20" rx="12" ry="4" fill="#1e1e1e" /><path d="M5 25C10 31 19 31 24 25" stroke="#cfcfcf" strokeWidth="2" fill="none" /></svg>
);
const PrevB = () => (
  <svg width="32" height="34" viewBox="0 0 32 34"><g transform="rotate(35 16 17)"><rect x="5" y="5" width="22" height="24" rx="7" fill="none" stroke="#3a3a3a" strokeWidth="3" /><path d="M5 13H27M16 6V28" stroke="#3f3f3f" strokeWidth="1.5" /></g></svg>
);
const PrevC = () => (
  <svg width="30" height="32" viewBox="0 0 30 32"><g transform="rotate(35 15 16)"><rect x="5" y="5" width="20" height="22" rx="6" fill="url(#redCyl)" /><ellipse cx="15" cy="9" rx="8" ry="4" fill="#7d0f10" /></g></svg>
);
const DispA = () => (
  <svg width="32" height="34" viewBox="0 0 32 34"><path d="M9 3L16 1C24 3 28 9 26 18C24 25 15 24 13 20C14 14 9 12 9 3Z" fill="#2fa0a5" /><path d="M6 32L24 30" stroke="#3a3a3a" strokeWidth="2" /><path d="M6 2L10 6" stroke="#222" strokeWidth="2" /></svg>
);
const DispB = () => (
  <svg width="32" height="34" viewBox="0 0 32 34"><g transform="rotate(35 16 17)"><rect x="8" y="2" width="16" height="14" rx="5" fill="#5fa52a" /><rect x="8" y="16" width="16" height="14" rx="5" fill="#e6e6e6" /></g></svg>
);
const DispC = () => (
  <svg width="30" height="30" viewBox="0 0 30 30"><circle cx="15" cy="15" r="13" fill="#efefef" /><path d="M15 2A13 13 0 0 0 15 28Z" fill="#e08423" /><path d="M14 2V28" stroke="#7a2c10" strokeWidth="1.4" /></svg>
);
const Ball = () => (
  <svg width="26" height="26" viewBox="0 0 26 26"><circle cx="13" cy="13" r="11" fill="url(#blueBall)" stroke="#26367a" strokeWidth="1.8" /></svg>
);

const hexIcon = (list: React.ReactNode[]) => list.map((n, i) => <React.Fragment key={i}>{n}</React.Fragment>);

export default function App() {
  return (
    <Page>
      <Global />
      <Defs />
      <WinShadow>
        <Win>
          <TitleBar>
            <Lights><Light $c="#ee6a5f" /><Light $c="#f5bd4f" /><Light $c="#61c454" /></Lights>
            <TitleText>Grasshopper - A2-01-alt</TitleText>
          </TitleBar>
          <TabStrip>
            <ActiveTab>Params</ActiveTab>
            {["Maths", "Sets", "Vector", "Curve", "Surface", "Mesh", "Intersect", "Transform", "Display", "Rhino", "Kangaroo2", "PanelingTools"].map(t => <Tab key={t}>{t}</Tab>)}
          </TabStrip>
          <Ribbon>
            <Panel $w={384.5}>
              <PanelIcons $pad={5}>
                <IconGrid $cols={1}>{hexIcon(GeoIcons)}</IconGrid><PanelSep />
                <IconGrid $cols={3}>{hexIcon(GeoA)}</IconGrid><PanelSep />
                <IconGrid $cols={2}>{hexIcon(GeoB)}</IconGrid>
              </PanelIcons>
              <PanelLabel>Geometry<Plus /></PanelLabel>
            </Panel>
            <Panel $w={120.5}>
              <PanelIcons><IconGrid $cols={2}>{hexIcon(PrimIcons)}</IconGrid></PanelIcons>
              <PanelLabel>Primitive<Plus /></PanelLabel>
            </Panel>
            <Panel $w={273}>
              <PanelIcons $pad={7}>
                <IconGrid $cols={1} $square>{hexIcon(InA)}</IconGrid><PanelSep $m={14.5} />
                <IconGrid $cols={2} $square>{hexIcon(InB)}</IconGrid><PanelSep $m={14.5} />
                <IconGrid $cols={1} $square>{hexIcon(InC)}</IconGrid>
              </PanelIcons>
              <PanelLabel>Input<Plus /></PanelLabel>
            </Panel>
            <Panel $w={217}>
              <PanelIcons $pad={7}>
                <IconGrid $cols={1} $square>{hexIcon(UtilA)}</IconGrid><PanelSep $m={14} />
                <IconGrid $cols={1} $square>{hexIcon(UtilB)}</IconGrid><PanelSep $m={13} />
                <IconGrid $cols={1} $square>{hexIcon(UtilC)}</IconGrid>
              </PanelIcons>
              <PanelLabel>Util<Plus /></PanelLabel>
            </Panel>
          </Ribbon>
          <Toolbar>
            <ToolBtn $w={52}><Folder /></ToolBtn>
            <ToolBtn $w={52} $ml={4}><Floppy /></ToolBtn>
            <ToolSep $ml={8} />
            <ZoomSelect>
              17%
              <ZoomArrow><svg width="14" height="10" viewBox="0 0 14 10"><path d="M2 2L7 7L12 2" stroke="#fff" strokeWidth="2.4" fill="none" /></svg></ZoomArrow>
            </ZoomSelect>
            <ToolBtn $w={64} $ml={5}><Focus /></ToolBtn>
            <ToolBtn $w={64} $ml={22}><Eye /></ToolBtn>
            <ToolBtn $w={51} $ml={20}><Brush /></ToolBtn>
            <Grow />
            <ToolBtn $w={52}><PrevA /></ToolBtn>
            <ToolBtn $w={52} $ml={2}><PrevB /></ToolBtn>
            <ToolBtn $w={52} $ml={2} $on><PrevC /></ToolBtn>
            <ToolSep $ml={14} />
            <ToolBtn $w={52} $ml={14}><DispA /></ToolBtn>
            <ToolBtn $w={51} $ml={1}><DispB /></ToolBtn>
            <ToolBtn $w={51} $ml={1}><DispC /></ToolBtn>
            <ToolSep $ml={4} />
            <ToolBtn $w={64} $ml={4} $mr={18}><Ball /></ToolBtn>
          </Toolbar>
          <Canvas>
            <Frame />
            {groups.map((g, i) => <Group key={i} $inner={g.inner} style={pos(g.b)} />)}
            <WireLayer width="1706" height="1750">
              {paths.map((d, i) => <path key={i} d={d} fill="none" stroke="#333" strokeWidth="1" />)}
            </WireLayer>
            {sliders.map((s, i) => <Slider key={i} style={pos(s.b)}><SliderGrip style={{ width: s.g }} /></Slider>)}
            {nodes.map((n, i) => <Node key={i} $gray={n.gray} style={pos(n.b)}><NodeBar style={{ left: n.bl, width: n.bw }} /></Node>)}
            {stickies.map((s, i) => <Sticky key={i} style={pos(s.b)}><StickyHead>{s.t}</StickyHead></Sticky>)}
            <ScrollStub />
            <NavWidget width="110" height="110" viewBox="-55 -55 110 110">
              <path d="M-43 -3C-43 -22 -26 -39 0 -43" fill="none" stroke="#000" strokeWidth="8" />
              <polygon points="-46,-44 -32,-42 -37,-30 -43,-32" fill="#000" />
              <circle r="39" fill="url(#navFill)" stroke="#fff" strokeWidth="3.5" />
              <circle r="41" fill="none" stroke="#1a1a1a" strokeWidth="1.6" />
              <polygon points="-32,-28 -19,-31 -21,-17" fill="#fff" />
              <polygon points="32,-28 19,-31 21,-17" fill="#fff" />
              <polygon points="-32,28 -19,31 -21,17" fill="#fff" />
              <polygon points="32,28 19,31 21,17" fill="#fff" />
            </NavWidget>
          </Canvas>
          <StatusBar>
            <Dots>...</Dots>
            <Version>1.0.0008</Version>
          </StatusBar>
        </Win>
      </WinShadow>
    </Page>
  );
}
